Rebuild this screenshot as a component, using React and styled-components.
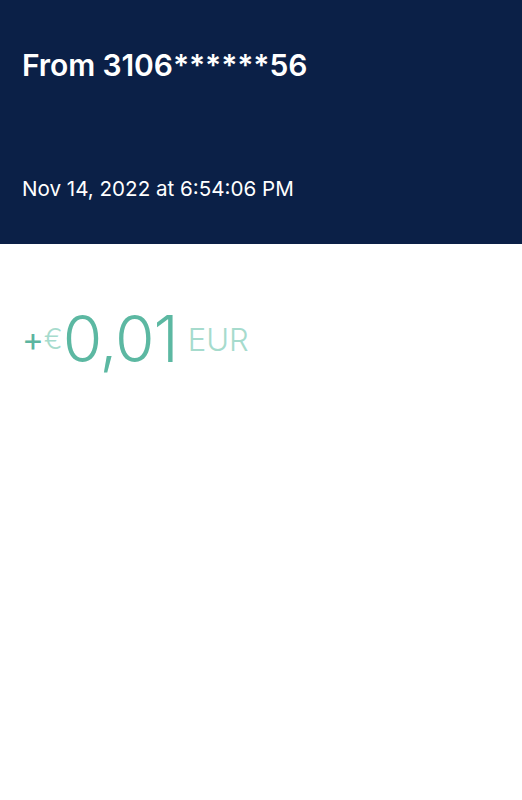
import React from "react";
import styled, { createGlobalStyle } from "styled-components";

const Global = createGlobalStyle`
  html, body { margin: 0; padding: 0; background: #ffffff; }
  body { font-family: Inter, "Noto Sans", sans-serif; }
`;

const Page = styled.div`
  width: 522px;
  min-height: 800px;
  background: #ffffff;
`;

const Header = styled.header`
  box-sizing: border-box;
  height: 244px;
  background: #0b2047;
  padding: 47px 22px 0;
  display: flex;
  flex-direction: column;
  color: #ffffff;
`;

const Title = styled.h1`
  margin: 0;
  font-size: 30px;
  font-weight: 600;
  line-height: 36px;
  letter-spacing: -0.1px;
`;

const DateLine = styled.div`
  margin-top: 94px;
  font-size: 20.6px;
  font-weight: 400;
  line-height: 24px;
`;

const AmountRow = styled.div`
  display: flex;
  align-items: center;
  padding: 63px 22px 0;
`;

const Part = styled.span`
  color: ${(p) => p.$color};
  font-size: ${(p) => p.$size}px;
  font-weight: ${(p) => p.$weight || 300};
  line-height: 1;
  margin-left: ${(p) => p.$ml || 0}px;
  letter-spacing: ${(p) => p.$ls || 0}px;
`;

export default function App() {
  return (
    <Page>
      <Global />
      <Header>
        <Title>From 3106******56</Title>
        <DateLine>Nov 14, 2022 at 6:54:06 PM</DateLine>
      </Header>
      <AmountRow>
        <Part $color="#5cb5a0" $size={33} $weight={400}>+</Part>
        <Part $color="#a6dbcd" $size={28}>€</Part>
        <Part $color="#5cb8a2" $size={64} $ls={-1} $ml={0}>0,01</Part>
        <Part $color="#a6dbcd" $size={31} $ml={10}>EUR</Part>
      </AmountRow>
    </Page>
  );
}
